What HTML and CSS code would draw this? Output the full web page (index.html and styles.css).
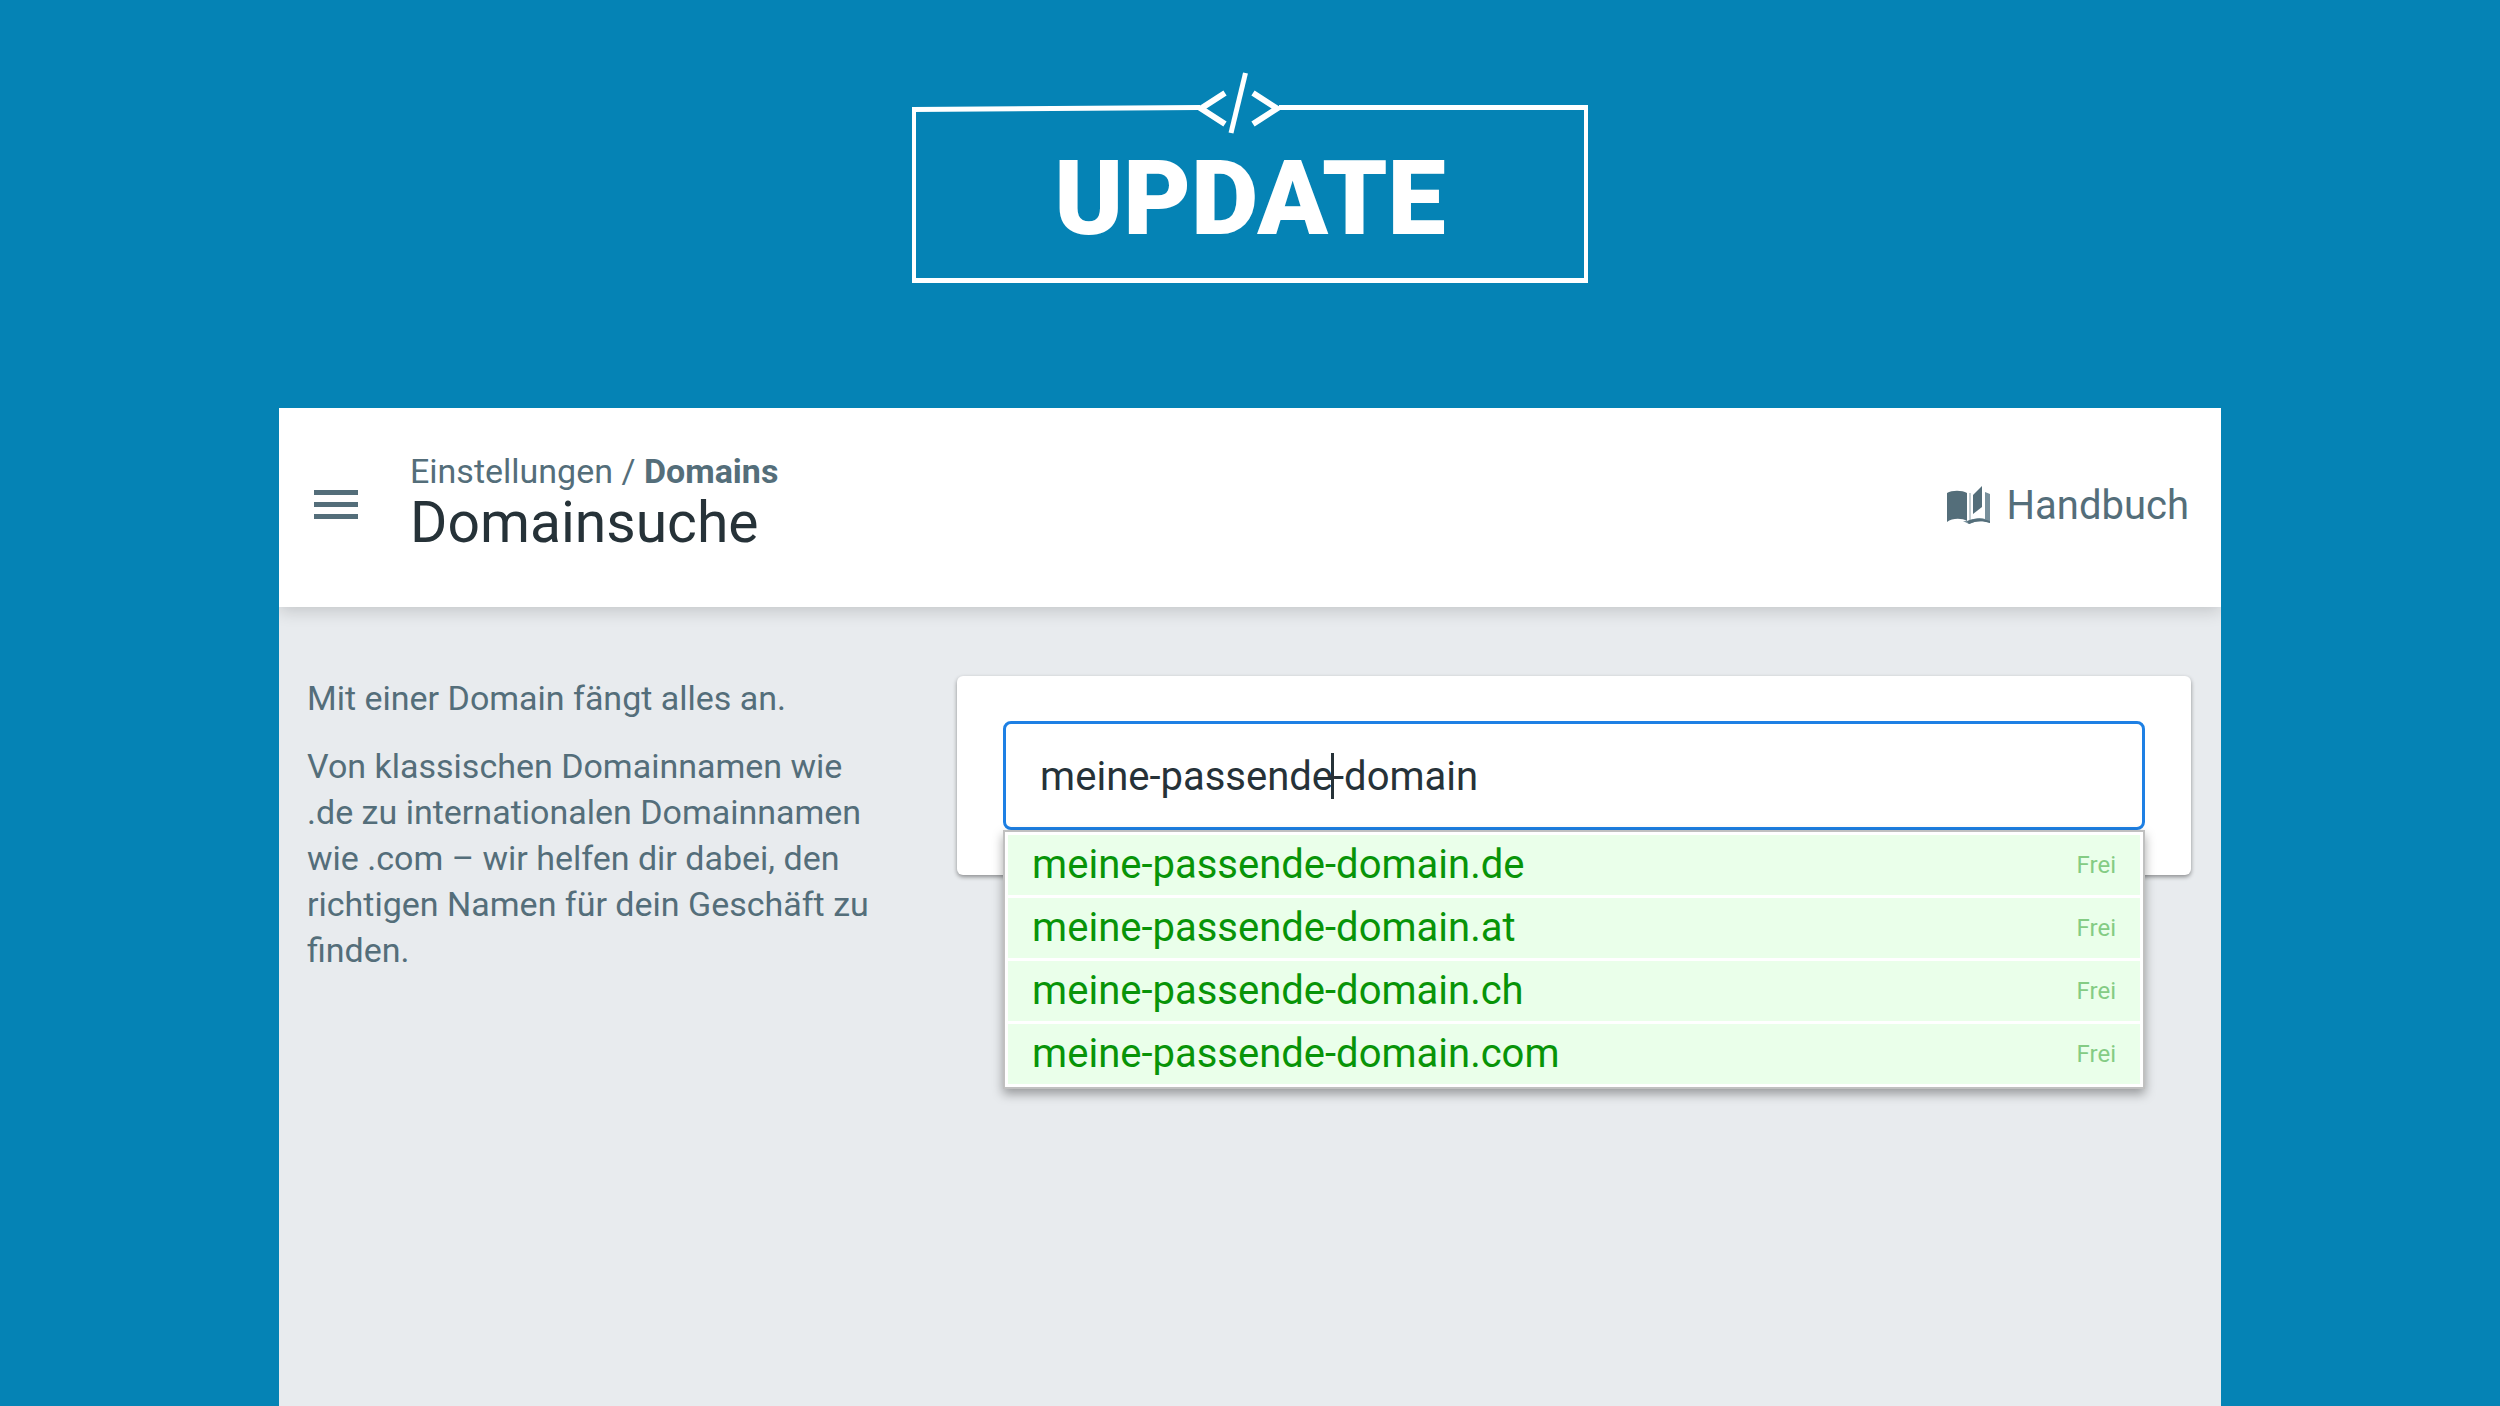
FILE: index.html
```
<!DOCTYPE html>
<html lang="de">
<head>
<meta charset="UTF-8">
<meta name="viewport" content="width=device-width, initial-scale=1.0">
<title>Domainsuche</title>
<link rel="stylesheet" href="styles.css">
</head>
<body>

<div class="banner">
  <!-- Rahmen mit Code-Symbol -->
  <svg class="banner-frame" viewBox="0 0 676 212" fill="none" stroke="#fff" aria-hidden="true">
    <path d="M2 35V211M674 33V211" stroke-width="4"/>
    <path d="M0 208.500H676M0 37.500L288 35.500M367 35.500H676" stroke-width="5"/>
    <path d="M313 21L289 36.500L313 52M341 21L365 36.500L341 52" stroke-width="6"/>
    <path d="M333.500 1L319 61" stroke-width="5"/>
  </svg>
  <div class="banner-title">UPDATE</div>
</div>

<div class="panel">
  <header class="topbar">
    <button class="menu-button" type="button" aria-label="Menü">
      <svg viewBox="0 0 46 32" width="46" height="32" fill="#546e7a"><path d="M1 0h44v5H1zM1 12h44v5H1zM1 24h44v5H1z"/></svg>
    </button>
    <div class="heading">
      <nav class="breadcrumb"><a href="#">Einstellungen</a> / <a href="#" class="current">Domains</a></nav>
      <h1>Domainsuche</h1>
    </div>
    <a href="#" class="manual">
      <svg viewBox="0 0 44 40" width="44" height="40" fill="#546e7a">
        <path d="M0 7C5 4 15 4 20 7V35C15 32 5 32 0 36z"/>
        <path d="M26 9L35 0V21L26 28z"/>
        <path d="M38 6L43 8V37C36 34 28 35 22 38L16 35H22C28 32 33 31 38 33z" fill="#78909c"/>
        <path d="M22 7H24V34H22z" fill="#c3cdd1"/>
        <path d="M20 35C27 32 34 32 43 35V37C34 34 28 35 22 38z"/>
      </svg>
      Handbuch
    </a>
  </header>

  <main class="content">
    <section class="intro">
      <p>Mit einer Domain fängt alles an.</p>
      <p>Von klassischen Domainnamen wie .de zu internationalen Domainnamen wie .com – wir helfen dir dabei, den richtigen Namen für dein Geschäft zu finden.</p>
    </section>

    <section class="card">
      <div class="search">
        <input type="text" id="domain" aria-label="Domain" value="meine-passende-domain" autocomplete="off" spellcheck="false">
        <span class="caret"></span>
        <ul class="suggestions">
          <li><span>meine-passende-domain.de</span><small>Frei</small></li>
          <li><span>meine-passende-domain.at</span><small>Frei</small></li>
          <li><span>meine-passende-domain.ch</span><small>Frei</small></li>
          <li><span>meine-passende-domain.com</span><small>Frei</small></li>
        </ul>
      </div>
    </section>
  </main>
</div>

</body>
</html>
```
FILE: styles.css
```
* {
  box-sizing: border-box;
}
body {
  margin: 0;
  min-height: 100vh;
  display: flex;
  flex-direction: column;
  align-items: center;
  background-color: #0583b5;
  font-family: Roboto, "Liberation Sans", sans-serif;
  color: #546e7a;
}
a {
  color: inherit;
  text-decoration: none;
}

/* Banner */
.banner {
  position: relative;
  width: 676px;
  height: 212px;
  margin: 72px 0 124px;
  padding-top: 65px;
}
.banner-frame {
  position: absolute;
  top: 0;
  left: 0;
  width: 100%;
  height: 100%;
}
.banner-title {
  font-size: 104px;
  line-height: 124px;
  font-weight: 900;
  text-align: center;
  color: #fff;
}

/* Fenster */
.panel {
  flex: 1;
  width: calc(100% - 558px);
  background-color: #e8ebee;
}
.topbar {
  display: flex;
  align-items: center;
  height: 199px;
  padding: 0 32px 4px 34px;
  background-color: #fff;
  box-shadow: 0 4px 16px rgba(0, 0, 0, 0.16);
  clip-path: inset(0 0 -30px 0);
}
.menu-button {
  display: flex;
  padding: 0;
  border: none;
  background: none;
  cursor: pointer;
}
.heading {
  flex: 1;
  padding-left: 51px;
  padding-bottom: 6px;
}
.breadcrumb {
  font-size: 34px;
  line-height: 40px;
}
.current {
  font-weight: 700;
}
h1 {
  margin: 0;
  font-size: 57px;
  line-height: 64px;
  font-weight: 400;
  color: #263238;
}
.manual {
  display: flex;
  align-items: center;
  gap: 16px;
  font-size: 40px;
  line-height: 48px;
}

.content {
  display: grid;
  grid-template-columns: 22fr 46fr;
  gap: 60px;
  align-items: start;
  padding: 68px 30px 0 28px;
}
.intro {
  padding-right: 16px;
  font-size: 34px;
  line-height: 46px;
}
.intro p {
  margin: 0 0 22px;
}
.card {
  height: 199px;
  margin-top: 1px;
  padding: 45px 46px;
  border-radius: 6px;
  background-color: #fff;
  box-shadow: 0 2px 4px rgba(0, 0, 0, 0.4);
}

/* Suche */
.search {
  position: relative;
}
.search input {
  display: block;
  width: 100%;
  height: 109px;
  padding: 2px 34px 0;
  border: 3px solid #1e80e4;
  border-radius: 8px;
  background-color: #fff;
  font-family: inherit;
  font-size: 40px;
  color: #263238;
  outline: none;
}
.caret {
  position: absolute;
  top: 32px;
  left: 328px;
  width: 3px;
  height: 46px;
  background-color: #263238;
}
.suggestions {
  position: absolute;
  top: 109px;
  left: 0;
  right: 0;
  display: grid;
  gap: 3px;
  margin: 0;
  padding: 3px;
  border: 2px solid #c0c0c0;
  background-color: #fff;
  box-shadow: 0 5px 10px rgba(0, 0, 0, 0.35);
  list-style: none;
}
.suggestions li {
  display: flex;
  align-items: center;
  justify-content: space-between;
  height: 60px;
  padding: 0 24px;
  background-color: #eaffea;
  font-size: 40px;
  line-height: 48px;
  color: #089408;
}
.suggestions small {
  font-size: 24px;
  color: #84cc84;
}
```
